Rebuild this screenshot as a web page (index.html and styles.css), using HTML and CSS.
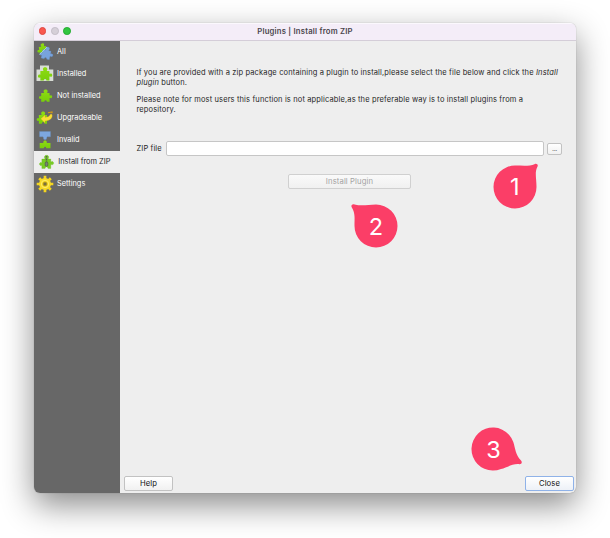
FILE: index.html
```html
<!DOCTYPE html>
<html lang="en">
<head>
<meta charset="utf-8">
<title>Plugins | Install from ZIP</title>
<link rel="stylesheet" href="styles.css">
</head>
<body>
<svg class="defs" width="0" height="0" aria-hidden="true">
  <defs>
    <linearGradient id="green" x1="0" y1="0" x2="0" y2="1"><stop offset="0" stop-color="#8fdc12"/><stop offset="1" stop-color="#78ce0b"/></linearGradient>
    <path id="piece" d="M2.500 4H5.500C6.300 4 5.200 3 5.200 2C5.200.7 6.200 0 7.500 0S9.800.7 9.800 2C9.800 3 8.700 4 9.500 4H12V6.500C12 7.300 12.600 6.600 13.400 6.600C14.400 6.600 15 7.300 15 8.300S14.400 10 13.400 10C12.600 10 12 9.300 12 10.200V14H9.200C8.500 14 9.200 12.200 7.500 12.200S6.500 14 5.800 14H2.500V11.300C2.500 10.400 2 10.900 1.400 10.900C.6 10.900 0 10.300 0 9.300S.6 7.700 1.400 7.700C2 7.700 2.500 8.200 2.500 7.300Z"/>
  </defs>
</svg>
<div class="window">
  <header class="titlebar">
    <div class="lights"><i class="red"></i><i class="grey"></i><i class="green"></i></div>
    <h1>Plugins | Install from ZIP</h1>
  </header>
  <div class="body">
    <nav class="sidebar">
      <a class="item"><svg class="icon" viewBox="0 0 18 18"><use href="#piece" fill="url(#green)" transform="translate(.4 1.200) rotate(-8) scale(.78)"/><use href="#piece" fill="#78a3dc" stroke="#628dc8" stroke-width=".3" transform="translate(5.500 2.600) rotate(12) scale(.88)"/><path d="M3.500 11.500 11 4" stroke="#b3cfef" stroke-width=".8"/></svg><span>All</span></a>
      <a class="item"><svg class="icon" viewBox="0 0 18 18"><path d="M4 .5h9v4h4.300v11.500H.5v-11.500H4z" fill="#d9ddd5"/><use href="#piece" fill="url(#green)" transform="translate(2 2.300) scale(.95)"/></svg><span>Installed</span></a>
      <a class="item"><svg class="icon" viewBox="0 0 18 18"><use href="#piece" fill="url(#green)" transform="translate(3 2.400) scale(.88)"/></svg><span>Not installed</span></a>
      <a class="item"><svg class="icon" viewBox="0 0 18 18"><use href="#piece" fill="url(#green)" transform="translate(.7 2.600) scale(.86)"/><path d="m4.800 9.700 4.200-3.700v2.200c3 .1 4.600-.9 5.400-3h1.500c1.200 3.200-1.200 6.400-6.900 6.700v2z" fill="#f8de36" stroke="#d8ae18" stroke-width=".3"/><path d="m12 3.800 4-.8v1.200" fill="none" stroke="#d59a16" stroke-width="1.100"/></svg><span>Upgradeable</span></a>
      <a class="item"><svg class="icon" viewBox="0 0 18 18"><path d="M3.500.5h11v5.300h-3.300c-.9 0 .5 3-2.100 3S7.900 5.800 7 5.800H3.500z" fill="#7da7df" stroke="#668ec3" stroke-width=".3"/><path d="M3.700 17.300v-5.200H7c.9 0-.3-2.500 2.100-2.500s1.200 2.500 2.100 2.500h3.300v5.200h-4c-.8 0 .1-1.500-1.400-1.500s-.7 1.500-1.500 1.500z" fill="url(#green)"/></svg><span>Invalid</span></a>
      <a class="item selected"><svg class="icon" viewBox="0 0 18 18"><use href="#piece" fill="#78cb24" stroke="#63b31b" stroke-width=".3" transform="translate(1.500 2.300) scale(.94)"/><path d="M8.500 3v7" stroke="#566052" stroke-width="1.500" stroke-dasharray="1 .5"/><rect x="7.200" y="9" width="2.600" height="4.300" rx="1.200" fill="#7b8478" stroke="#4f5a4b" stroke-width=".7"/></svg><span>Install from ZIP</span></a>
      <a class="item"><svg class="icon" viewBox="0 0 18 18"><g stroke="#f4d51e" stroke-width="2.700"><path d="M9 .7v16.600M.7 9h16.600M3.200 3.200l11.600 11.600M14.800 3.200 3.200 14.800"/></g><circle cx="9" cy="9" r="6" fill="#f6da27"/><circle cx="9" cy="9" r="3.700" fill="none" stroke="#fff078" stroke-width=".8"/><circle cx="9" cy="9" r="2" fill="#79713d" stroke="#c4a512" stroke-width=".7"/></svg><span>Settings</span></a>
    </nav>
    <main class="content">
      <div class="copy">
        <p>If you are provided with a zip package containing a plugin to install,please select the file below and click the <em>Install</em><br><em>plugin</em> button.</p>
        <p>Please note for most users this function is not applicable,as the preferable way is to install plugins from a<br>repository.</p>
      </div>
      <div class="file-row"><label for="zip">ZIP file</label><input id="zip" type="text"><button class="browse">...</button></div>
      <button class="install" disabled>Install Plugin</button>
      <footer><button>Help</button><button class="close">Close</button></footer>
    </main>
  </div>
</div>
<div class="marker one"><svg viewBox="-30 -30 60 60"><path d="M0-21.500C8-21.500 14-20.500 20-23.100c2-.6 3.600 1.200 2.300 3C19.500-15 21.500-8 21.500 0A21.500 21.500 0 1 1 0-21.500z"/></svg><b>1</b></div>
<div class="marker two"><svg viewBox="-30 -30 60 60"><path d="M0-21.500C-8-21.500-14-19.500-21.500-21.600c-2-.7-4 .9-2.800 2.800C-20.500-13-21.500-7-21.500 0A21.500 21.500 0 1 0 0-21.500z"/></svg><b>2</b></div>
<div class="marker three"><svg viewBox="-30 -30 60 60"><path d="M20.300-7C22.300-.8 22.500 6 27.800 11.300c1.900 1.700.8 4-1.300 3.900C19 14.500 14 18.500 8 20A21.500 21.500 0 1 1 20.300-7z"/></svg><b>3</b></div>
</body>
</html>
```
FILE: styles.css
```css
* { box-sizing: border-box; }
body {
  margin: 0;
  width: 610px;
  height: 538px;
  padding: 23px 34px 45px;
  overflow: hidden;
  position: relative;
  background: #fff;
  color: #262626;
  font: 7.5px/10px Inter, "Liberation Sans", sans-serif;
}
.defs { position: absolute; }
.window {
  width: 542px;
  height: 470px;
  display: flex;
  flex-direction: column;
  border-radius: 6px;
  overflow: hidden;
  background: #eee;
  box-shadow: 0 0 1px rgba(0,0,0,.4), 0 12px 32px rgba(0,0,0,.46);
}
.titlebar {
  height: 17.500px;
  flex: none;
  display: grid;
  grid-template-columns: 60px 1fr 60px;
  align-items: center;
  background: #f4edf8;
  border-bottom: 1px solid #d4cdd8;
  box-shadow: inset 0 1px #fbf8fd;
}
.lights { display: flex; gap: 4.600px; padding-left: 4.800px; }
.lights i { width: 7.700px; height: 7.700px; border-radius: 50%; }
.red { background: #f9574f; border: .5px solid #df4640; }
.grey { background: #d5cfd8; border: .5px solid #c3bdc7; }
.green { background: #31c540; border: .5px solid #25ac32; }
h1 { margin: 0; padding-top: 1px; text-align: center; font-size: 7.700px; line-height: 10px; font-weight: 600; letter-spacing: .22px; color: #49454b; }
.body { flex: 1; display: flex; min-height: 0; }
.sidebar { width: 86px; background: #676767; flex: none; }
.item { height: 22px; display: flex; align-items: center; gap: 3.500px; padding-left: 1.500px; color: #fff; font-size: 7.400px; white-space: nowrap; }
.icon { width: 18px; height: 18px; flex: none; }
.item span { padding-top: .5px; }
.item.selected { background: #eee; color: #262626; padding-left: 3.500px; }
.selected span { margin-left: -.8px; }
.content { flex: 1; display: flex; flex-direction: column; padding: 27px 2px 2px 4px; }
.copy { padding-left: 12.500px; white-space: nowrap; letter-spacing: .138px; }
p { margin: 0 0 7px; }
.file-row { display: flex; align-items: center; margin: 19.500px 12px 0 12.500px; height: 15px; }
label { width: 29px; white-space: nowrap; letter-spacing: .1px; }
input { flex: 1; min-width: 0; height: 15px; border: 1px solid #c6c6c6; border-radius: 2px; background: #fff; padding: 0 3px; }
button {
  font: inherit;
  font-size: 7.700px;
  height: 15px;
  padding: 1px 0 0;
  border: 1px solid #c2c2c2;
  border-radius: 2px;
  background: linear-gradient(#fff, #f1f1f1);
  color: #111;
  letter-spacing: .1px;
}
.browse { width: 15px; height: 12px; margin-left: 3px; line-height: 8px; color: #666; font-size: 7px; letter-spacing: -.3px; }
.install { width: 123px; margin: 18px 0 0 164px; color: #a3a3a3; border-color: #d0d0d0; background: linear-gradient(#fafafa, #f0f0f0); }
footer { margin-top: auto; display: flex; justify-content: space-between; }
footer button { width: 49px; }
footer .close { border-color: #8fb2e8; background: linear-gradient(#fff, #edf1f7); }
.marker { position: absolute; width: 60px; height: 60px; display: grid; place-items: center; }
.marker svg { grid-area: 1 / 1; width: 60px; height: 60px; fill: #fb3e67; }
.marker b { grid-area: 1 / 1; z-index: 1; padding-top: 1px; color: #fff; font-size: 23.500px; line-height: 24px; font-weight: 400; }
.one { left: 484.700px; top: 156.800px; }
.two { left: 346px; top: 196.200px; }
.three { left: 463.400px; top: 419.400px; }
```
